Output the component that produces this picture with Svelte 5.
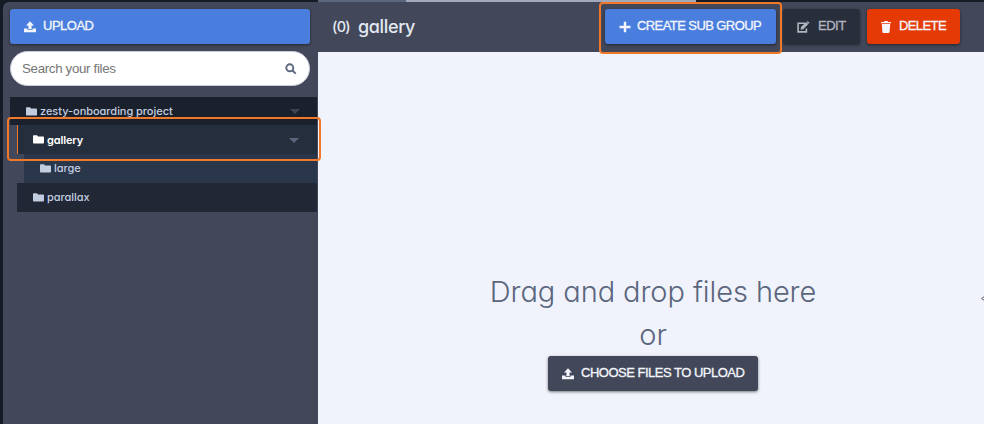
<script>
  const folders = [
    { name: 'zesty-onboarding project', kind: 'root', arrow: true },
    { name: 'gallery', kind: 'active', arrow: true },
    { name: 'large', kind: 'child', arrow: false },
    { name: 'parallax', kind: 'sibling', arrow: false }
  ];
</script>

{#snippet upload()}
  <svg class="icon" viewBox="0 0 12 12"><path d="M6 0.3 10 4.4H7.6V8H4.4V4.4H2Z M0 7.4H3.4V8.8H8.6V7.4H12V11.2H0Z" /></svg>
{/snippet}

<div class="app">
  <div class="strip"><i class="slate"></i><i class="pale"></i></div>
  <div class="body">
    <aside>
      <button class="btn blue wide">{@render upload()}<span>UPLOAD</span></button>
      <div class="search">
        <span>Search your files</span>
        <svg viewBox="0 0 12 12"><circle cx="4.8" cy="4.8" r="3.5" /><path d="M7.5 7.5 10.7 10.7" /></svg>
      </div>
      <nav>
        {#each folders as f}
          <div class="row {f.kind}">
            <svg class="folder" viewBox="0 0 11 9"><path d="M0 1Q0 .3.8.3H4L5 1.6H10.2Q11 1.6 11 2.4V7.7Q11 8.5 10.2 8.5H.8Q0 8.5 0 7.7Z" /></svg>
            <span>{f.name}</span>
            {#if f.arrow}<b class="caret"></b>{/if}
          </div>
        {/each}
      </nav>
    </aside>
    <main>
      <header>
        <h1><small>(0)</small><span>gallery</span></h1>
        <button class="btn blue create">
          <svg class="icon" viewBox="0 0 12 12"><path d="M4.8 .8H7.2V4.8H11.5V7.2H7.2V11.3H4.8V7.2H.5V4.8H4.8Z" /></svg>
          <span>CREATE SUB GROUP</span>
        </button>
        <button class="btn edit">
          <svg class="icon pencil" viewBox="0 0 13 12"><path d="M8 2.2H1.1V10.9H9.4V7.5" fill="none" stroke="currentColor" stroke-width="1.6" /><path d="M3.6 8.7 4 6.1 9.3 1 11.3 3 6.2 8.3Z M9.9.5Q10.5-.1 11.1.4L12.2 1.4Q12.7 2 12.1 2.5L11.8 2.7 9.7.7Z" /></svg>
          <span>EDIT</span>
        </button>
        <button class="btn red">
          <svg class="icon trash" viewBox="0 0 10 12"><path d="M0 .9H3L3.5 0H6.5L7 .9H10V2.2H0Z M.8 3H9.2L8.6 11Q8.5 12 7.6 12H2.4Q1.5 12 1.4 11Z" /></svg>
          <span>DELETE</span>
        </button>
      </header>
      <section>
        <p class="drag">Drag and drop files here</p>
        <p>or</p>
        <button class="btn choose">{@render upload()}<span>CHOOSE FILES TO UPLOAD</span></button>
      </section>
    </main>
  </div>
  <div class="outline group"></div>
  <div class="outline action"></div>
  <svg class="cursor" viewBox="0 0 3 5"><path d="M3 .5 1 2.5 3 4.5" /></svg>
</div>

<style>
  .app {
    position: relative;
    width: 984px;
    height: 424px;
    overflow: hidden;
    background: #171b26;
    font-family: Inter, 'Noto Sans', sans-serif;
    font-feature-settings: 'cv11';
  }
  .strip { display: flex; height: 2px; padding-left: 318px; }
  .slate { width: 88px; background: #5b667d; }
  .pale { width: 290px; background: #a2a9bc; }
  .body { display: flex; height: 422px; padding-left: 3px; }
  aside {
    box-sizing: border-box;
    width: 315px;
    padding: 7px 1px 0 7px;
    background: #424859;
    border-radius: 6px 0 0 0;
  }
  .btn {
    display: flex;
    align-items: center;
    box-sizing: border-box;
    height: 35px;
    padding: 0 0 0 14px;
    border: 0;
    border-radius: 3px;
    color: #f4f6fb;
    font: 400 13px/35px 'Liberation Sans', Arial, sans-serif;
    letter-spacing: -.5px;
    -webkit-text-stroke: .3px currentColor;
    white-space: nowrap;
    box-shadow: 0 1px 3px rgba(0, 0, 0, .5);
  }
  .btn span { height: 35px; line-height: 34px; }
  .btn .icon { margin-top: 1px; }
  .icon { width: 12px; height: 12px; margin-right: 7px; fill: currentColor; flex: none; }
  .blue { background: #497edf; }
  .wide { width: 300px; }
  .search {
    display: flex;
    align-items: center;
    justify-content: space-between;
    box-sizing: border-box;
    width: 300px;
    height: 35px;
    margin: 7px 0 11px;
    padding: 0 12px 0 11px;
    border: 1px solid #c7ccda;
    border-radius: 18px;
    background: #fff;
    color: #757575;
    font: 13.33px 'Liberation Sans', Arial, sans-serif;
    letter-spacing: -.33px;
  }
  .search svg { width: 12px; height: 12px; fill: none; stroke: #5b667d; stroke-width: 1.9; }
  .row {
    display: flex;
    align-items: center;
    box-sizing: border-box;
    height: 29px;
    color: #c3cde0;
    font-size: 11px;
    font-weight: 500;
    letter-spacing: -.04px;
  }
  .folder { width: 11px; height: 9px; margin-right: 3px; fill: currentColor; }
  .root { height: 28px; padding-left: 16px; background: #1b212c; }
  .active { margin-left: 7px; padding-left: 15px; border-left: 1px solid #f17829; background: #252e3d; color: #fff; font-weight: 600; letter-spacing: -.15px; }
  .child { margin-left: 14px; padding: 0 0 1px 16px; background: #2a364a; }
  .sibling { margin-left: 7px; padding: 0 0 1px 16px; background: #212735; }
  .caret {
    margin: 1px 17px 0 auto;
    border: 5px solid transparent;
    border-top-color: #3d4454;
    border-bottom: 0;
  }
  .active .caret { margin-right: 18px; border-top-color: #5b667d; }
  main { width: 666px; background: #f0f3fc; }
  header {
    display: flex;
    box-sizing: border-box;
    height: 50px;
    padding: 7px 24px 0 14px;
    background: #424859;
  }
  h1 {
    display: flex;
    align-items: center;
    width: 273px;
    height: 35px;
    margin: 0;
    color: #e4e8f3;
    font-size: 18px;
    font-weight: 500;
    letter-spacing: -.35px;
  }
  h1 small { width: 26px; font-size: 14.5px; font-weight: 500; letter-spacing: -.7px; }
  .create { width: 171px; margin-right: 7px; letter-spacing: -.58px; }
  .create .icon { margin-right: 6px; }
  .edit { width: 77px; margin-right: 7px; background: #292e3b; color: #b2b6c1; }
  .edit .pencil { width: 13px; height: 12px; margin-right: 8px; }
  .red { width: 93px; background: #e53a05; letter-spacing: -.6px; }
  .red .trash { width: 10px; margin-right: 8px; }
  section { display: flex; flex-direction: column; align-items: center; padding: 218px 0 0 4px; }
  p { height: 43px; margin: 0; color: #5b667d; font-size: 29px; font-weight: 350; line-height: 43px; letter-spacing: -.08px; white-space: nowrap; }
  .choose { width: 210px; background: #424859; }
  .outline { position: absolute; box-sizing: border-box; border: 2px solid #f17829; border-radius: 4px; }
  .group { left: 7px; top: 117px; width: 314px; height: 44px; }
  .action { left: 599px; top: 2px; width: 183px; height: 52px; }
  .cursor { position: absolute; left: 981px; top: 296px; width: 3px; height: 5px; fill: #fff; stroke: #202020; stroke-width: 1; }
</style>
